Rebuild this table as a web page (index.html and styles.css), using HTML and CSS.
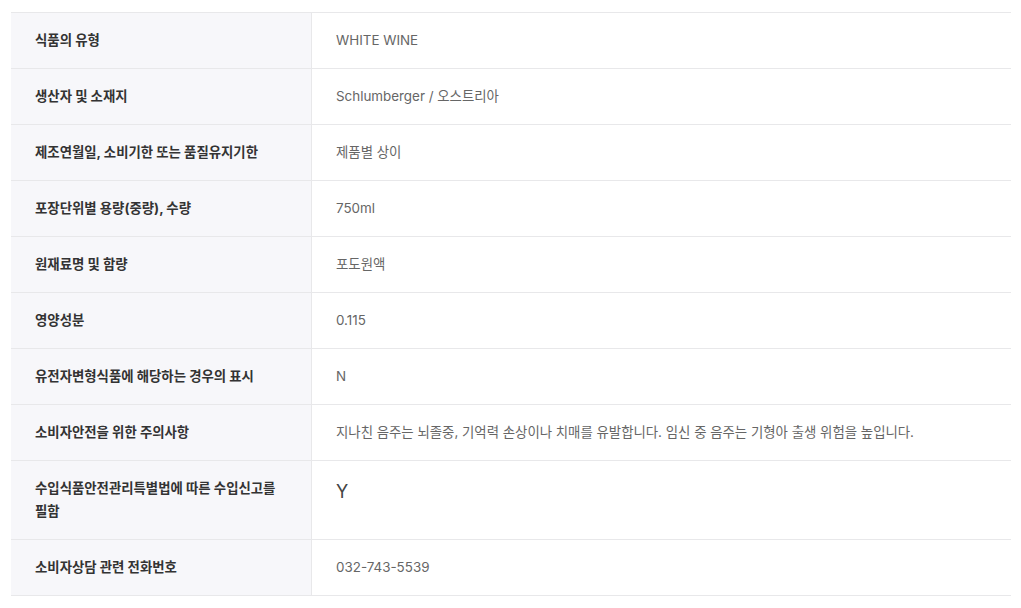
FILE: index.html
```html
<!DOCTYPE html>
<html lang="ko">
<head>
<meta charset="utf-8">
<link rel="stylesheet" href="styles.css">
</head>
<body>
<div class="wrap">
<table class="info">
  <tr><th>식품의 유형</th><td>WHITE WINE</td></tr>
  <tr><th>생산자 및 소재지</th><td>Schlumberger / 오스트리아</td></tr>
  <tr><th>제조연월일, 소비기한 또는 품질유지기한</th><td>제품별 상이</td></tr>
  <tr><th>포장단위별 용량(중량), 수량</th><td>750ml</td></tr>
  <tr><th>원재료명 및 함량</th><td>포도원액</td></tr>
  <tr><th>영양성분</th><td>0.115</td></tr>
  <tr><th>유전자변형식품에 해당하는 경우의 표시</th><td>N</td></tr>
  <tr><th>소비자안전을 위한 주의사항</th><td>지나친 음주는 뇌졸중, 기억력 손상이나 치매를 유발합니다. 임신 중 음주는 기형아 출생 위험을 높입니다.</td></tr>
  <tr><th>수입식품안전관리특별법에 따른 수입신고를 필함</th><td class="top"><span class="big">Y</span></td></tr>
  <tr><th>소비자상담 관련 전화번호</th><td>032-743-5539</td></tr>
</table>
</div>
</body>
</html>
```
FILE: styles.css
```css
html, body {
  margin: 0;
  padding: 0;
  background: #fff;
}
body {
  font-family: Inter, "Noto Sans CJK KR", sans-serif;
}
.wrap {
  padding: 12px 11px 0 11px;
}
.info {
  width: 1000px;
  border-collapse: collapse;
  border-top: 1px solid #e8e8ea;
}
.info tr {
  border-bottom: 1px solid #e8e8ea;
}
.info th {
  width: 252px;
  background: #f7f7fa;
  border-right: 1px solid #e8e8ea;
  text-align: left;
  font-weight: 700;
  font-size: 13.4px;
  line-height: 23px;
  color: #333;
  padding: 16px 24px;
  vertical-align: middle;
  word-break: keep-all;
}
.info td {
  font-size: 13.4px;
  line-height: 23px;
  color: #666;
  padding: 16px 24px;
  vertical-align: middle;
  word-break: keep-all;
}
.info td.top {
  vertical-align: top;
  padding-top: 16px;
}
.big {
  font-size: 18px;
  line-height: 30px;
  color: #444;
}
```
